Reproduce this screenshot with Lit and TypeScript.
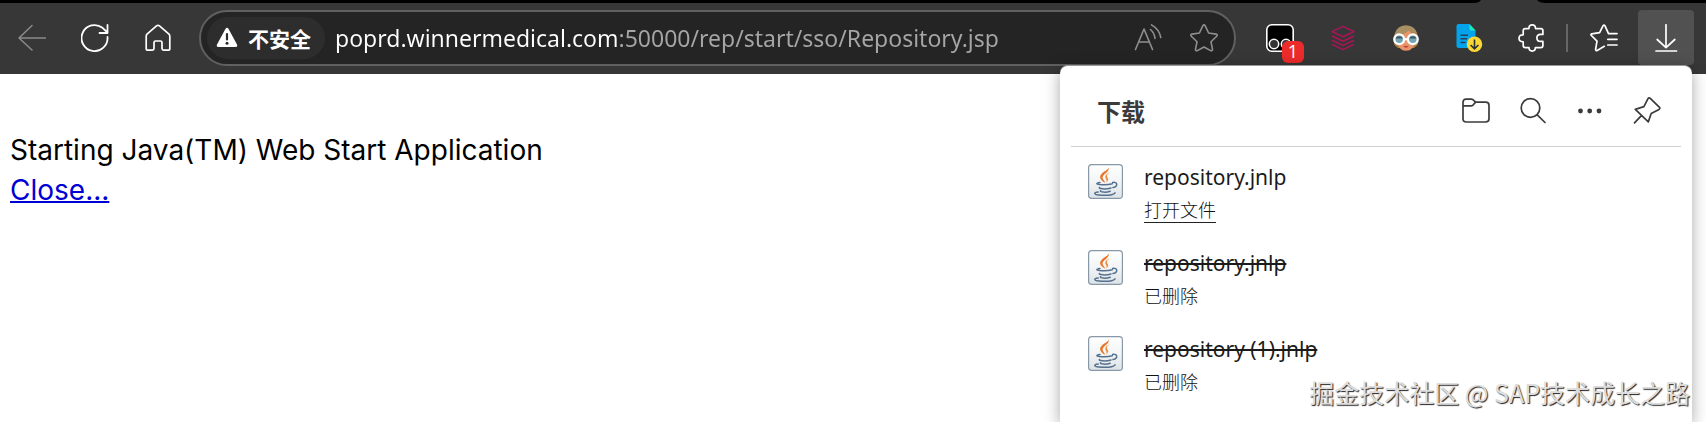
import { LitElement, html, css, svg } from "lit";
import { customElement, property } from "lit/decorators.js";

const icon = (size: number, body: unknown) =>
  html`<svg width=${size} height=${size} viewBox="0 0 ${size} ${size}" aria-hidden="true">${body}</svg>`;

const line = (d: string, width = 1.7) =>
  svg`<path d=${d} fill="none" stroke="currentColor" stroke-width=${width} stroke-linecap="round" stroke-linejoin="round"/>`;

const icons = {
  back: icon(28, line("M27.5 14H1M14 1.5L1 14L14 26", 1.5)),
  reload: icon(28, line("M26.5 13A13 13 0 1 1 21.5 3.8L26 8M26.5 1V9H18.5", 1.8)),
  home: icon(
    28,
    line(
      "M2.2 12.2Q2.2 11 3 10.2L12.8 1.7Q14 .8 15.2 1.7L25 10.2Q25.8 11 25.8 12.2V24.4Q25.8 26.2 24 26.2H19.6Q18 26.2 18 24.6V18.6Q18 17 16.4 17H11.6Q10 17 10 18.6V24.6Q10 26.2 8.4 26.2H4Q2.2 26.2 2.2 24.4Z",
    ),
  ),
  warning: icon(
    22,
    svg`<path d="M9.4 2Q11 -.4 12.6 2L21 17.4Q22 20 19.4 20H2.6Q0 20 1 17.4Z" fill="currentColor"/>
      <path d="M11 7V12.5" stroke="#2d2d2d" stroke-width="2.2" stroke-linecap="round"/><circle cx="11" cy="16.2" r="1.5" fill="#2d2d2d"/>`,
  ),
  readAloud: icon(28, line("M1.5 25.5L10 5L18.5 25.5M4.7 18H15.3M16.5 5.5Q20.5 9 21 14.5M17.5 .9Q25.5 5.5 26.8 13.5", 1.6)),
  star: icon(
    28,
    line(
      "M12.9 1.6Q14 -.2 15.1 1.6L18.6 9L26 10.1Q28 10.6 26.7 12.2L21 17.8L22.5 25.2Q22.5 27.3 20.7 26.6L14 23L7.3 26.6Q5.5 27.3 5.5 25.2L7 17.8L1.3 12.2Q0 10.6 2 10.1L9.4 9Z",
      1.6,
    ),
  ),
  monkey: icon(
    28,
    svg`<rect x=".8" y=".8" width="26.4" height="26.4" rx="5" fill="#000" stroke="#fff" stroke-width="1.6"/>
      <circle cx="8" cy="20" r="4.7" fill="#333" stroke="#fff" stroke-width="1.5"/><circle cx="20" cy="20" r="4.7" fill="#333" stroke="#fff" stroke-width="1.5"/>`,
  ),
  layers: icon(
    28,
    svg`<path d="M14 2.4L25 7.6L14 12.8L3 7.6ZM3 12L14 17.2L25 12M3 16.2L14 21.4L25 16.2M3 20.4L14 25.6L25 20.4" fill="none" stroke="#ad1457" stroke-width="1.5" stroke-linejoin="round"/>`,
  ),
  face: icon(
    28,
    svg`<path d="M2.5 21Q.5 13 4 7Q8 1.4 14 1.4Q20 1.4 24 7Q27.5 13 25.5 21L22 24H6Z" fill="#b0803f"/>
      <path d="M5.5 11Q12 11 17 6Q19 10 23 11V17Q22 26.8 14 26.8Q6 26.8 5.5 17Z" fill="#e8956b"/>
      <path d="M3 9.5Q5 1.4 14 1.4Q23 1.4 25 9.5Q20 9 17 6Q12 11 3 11Z" fill="#a89065"/>
      <path d="M11 22.6Q14 21 17 22.6Q14 24.8 11 22.6Z" fill="#c6433c"/>
      <circle cx="7.2" cy="15.2" r="4.9" fill="#71a6b5" stroke="#fff" stroke-width="2.3"/><circle cx="20.8" cy="15.2" r="4.9" fill="#71a6b5" stroke="#fff" stroke-width="2.3"/>
      <path d="M3.5 14.5A4 4 0 0 1 10.8 14.5ZM17.2 14.5A4 4 0 0 1 24.5 14.5Z" fill="#40555c"/><path d="M12.2 15.2H15.8" stroke="#fff" stroke-width="2.2"/>`,
  ),
  doc: icon(
    28,
    svg`<path d="M3.5 0H14.5L20.5 6.5V24H3.5Q1.5 24 1.5 22V2Q1.5 0 3.5 0Z" fill="#03a4ec"/><path d="M14.5 0L20.5 6.5H16Q14.5 6.5 14.5 5Z" fill="#1de9b6"/>
      <path d="M5.5 11.2H13M5.5 14.8H12M5.5 18.4H10.5" stroke="#263f58" stroke-width="1.5"/><circle cx="19.5" cy="20.3" r="7.7" fill="#fdd835"/>
      <path d="M19.5 15.5V24.5M15.6 21L19.5 24.8L23.4 21" fill="none" stroke="#263238" stroke-width="1.6"/>`,
  ),
  puzzle: icon(
    28,
    line(
      "M7.4 4.6H10.9Q10.8 .9 14.2 .9Q17.6 .9 17.5 4.6H22.7Q24.9 4.6 24.9 6.8V10.4H22.6Q18.9 10.6 18.9 14Q18.9 17.4 22.6 17.4H24.9V21.4Q24.9 23.6 22.7 23.6H17.4Q17.4 27.1 14.2 27.1Q11 27.1 11 23.6H7.4Q5.2 23.6 5.2 21.4V17.8Q1 17.8 1 14.2Q1 10.6 5.2 10.8V6.8Q5.2 4.6 7.4 4.6Z",
    ),
  ),
  favorites: icon(
    28,
    line(
      "M27 9.6H18.5L14.9 1.7Q14 .3 13.1 1.7L9.6 8.6L1.8 9.8Q.4 10.4 1.4 11.5L7 17.2L5.6 25.4Q5.8 27 7.2 26.4L14.3 22.3M17.8 15.3H27M17.8 21H27",
    ),
  ),
  download: icon(28, line("M14 .8V22.5M5.2 15.5L14 23.6L22.8 15.5M4 27H24.5", 1.7)),
  folder: icon(
    28,
    line(
      "M4 2.2H9.4Q10.8 2.2 12 3.6L13.7 5.2H23.6Q27 5.2 27 8.4V21.8Q27 25 23.6 25H4.2Q1 25 1 21.8V5.4Q1 2.2 4 2.2ZM1 8.8H9.2Q10.8 8.8 11.8 7.2L13.7 5.2",
    ),
  ),
  search: icon(28, svg`<circle cx="11.5" cy="11" r="9.3" fill="none" stroke="currentColor" stroke-width="1.7"/>${line("M18.2 17.8L26 25.5")}`),
  more: icon(28, svg`<circle cx="4.5" cy="14" r="2.4" fill="currentColor"/><circle cx="13.7" cy="14" r="2.4" fill="currentColor"/><circle cx="23" cy="14" r="2.4" fill="currentColor"/>`),
  pin: icon(28, line("M17 1.2L26.5 10.3Q27.3 11.6 26 12.4L18.2 16.5L15.3 24.9L2.3 12.4L10.9 9.6L15 1.7Q15.8 .3 17 1.2ZM8.4 18.7L1.5 25.8")),
  java: icon(
    35,
    svg`<defs><linearGradient id="tile" x1="0" y1="0" x2="0" y2="1"><stop offset="0" stop-color="#fff"/><stop offset=".5" stop-color="#f3f5f6"/><stop offset="1" stop-color="#dce2e6"/></linearGradient></defs>
      <rect x=".6" y=".6" width="33.8" height="33.8" rx="3.2" fill="url(#tile)" stroke="#8998a7" stroke-width="1.2"/>
      <path d="M20.3 3.2C23 8.2 12.4 10.3 15 15.1C15.7 16.5 17 17.6 17 18.8C12 15.6 10.2 12.7 14.6 8.7C17.5 6.4 20.7 5.6 20.3 3.2Z" fill="#e8762b"/>
      <path d="M22.5 8.6C16.8 10.3 19.3 13.4 20 14.6C20.7 16 19.4 17.5 18.2 18.4C19.4 15.7 17.6 15.1 17.3 13.1C17 10.8 19.7 9.1 22.5 8.6Z" fill="#ed8b3c"/>
      <g fill="none" stroke="#56718f" stroke-width="1.5" stroke-linecap="round"><path d="M12 18.4C7 19.2 8.5 20.6 13.5 20.8C18 21 22.5 20.4 24.3 19.8M24.6 18.5C29.5 17.3 30.5 22.3 25 23.6M11.6 23.5C9.5 24.7 17.5 25.6 23 24M12.6 26.7C11.5 28.2 18 28.8 22.2 27.2"/><path d="M10.2 28C5.8 28.4 5.2 30.4 11 30.9C17 31.4 25.2 31 27 28.9"/></g>`,
  ),
};

const buttonReset = css`
  button {
    display: flex;
    align-items: center;
    justify-content: center;
    padding: 0;
    border: 0;
    background: none;
    color: inherit;
    font: inherit;
  }
  svg {
    display: block;
    flex: none;
  }
`;

@customElement("browser-toolbar")
export class BrowserToolbar extends LitElement {
  static styles = [
    buttonReset,
    css`
      :host {
        display: block;
        background: #373737;
        color: #fff;
        font-family: "Open Sans", "Noto Sans CJK SC", sans-serif;
      }
      .tabs {
        display: flex;
        justify-content: flex-end;
        height: 3px;
        padding-right: 160px;
        background: #000;
      }
      .bar {
        display: flex;
        align-items: center;
        height: 55px;
        padding: 7px 12px 9px 0;
      }
      .tool {
        width: 63px;
        height: 55px;
      }
      .disabled {
        color: #8b8b8b;
      }
      .address {
        display: flex;
        flex: 1;
        align-items: center;
        box-sizing: border-box;
        height: 56px;
        min-width: 0;
        margin: 0 12px 0 10px;
        padding: 0 2px 0 6px;
        border: 2px solid #606060;
        border-radius: 28px;
        background: #242424;
      }
      .address .security {
        gap: 10px;
        height: 42px;
        padding: 0 14px 0 9px;
        border-radius: 21px;
        background: #2d2d2d;
        font-family: "Noto Sans CJK SC", sans-serif;
        font-size: 21px;
        font-weight: 700;
      }
      .url {
        flex: 1;
        min-width: 0;
        height: 42px;
        margin-left: 10px;
        padding: 0;
        border: 0;
        outline: 0;
        background: linear-gradient(90deg, #fff 284px, #a6a6a6 284px);
        background-clip: text;
        -webkit-background-clip: text;
        color: transparent;
        font-family: "Noto Sans", sans-serif;
        font-size: 23px;
      }
      .address .inner {
        width: 56px;
        color: #8f8f8f;
      }
      .badged {
        position: relative;
      }
      .badge {
        position: absolute;
        left: 34px;
        top: 31px;
        width: 22px;
        height: 22px;
        border-radius: 6px;
        background: #ee2b2b;
        font-size: 18px;
        line-height: 21px;
        text-align: center;
      }
      .divider {
        width: 2px;
        height: 28px;
        margin: 0 4px 0 3px;
        background: #666;
      }
      .bar .active {
        width: 56px;
        margin-left: 3px;
        border-radius: 4px;
        background: #515151;
      }
    `,
  ];

  render() {
    return html`
      <div class="tabs">
        <svg width="72" height="3" viewBox="0 0 72 3"><path d="M0 3Q5 3 7 0H63Q65 3 72 3Z" fill="#373737" /></svg>
      </div>
      <div class="bar">
        <button class="tool disabled" disabled aria-label="返回">${icons.back}</button>
        <button class="tool" aria-label="刷新">${icons.reload}</button>
        <button class="tool" aria-label="主页">${icons.home}</button>
        <div class="address">
          <button class="security">${icons.warning}<span>不安全</span></button>
          <input class="url" aria-label="地址" spellcheck="false" value="poprd.winnermedical.com:50000/rep/start/sso/Repository.jsp" />
          <button class="inner" aria-label="朗读">${icons.readAloud}</button>
          <button class="inner" aria-label="收藏">${icons.star}</button>
        </div>
        <button class="tool badged" aria-label="扩展">${icons.monkey}<span class="badge">1</span></button>
        <button class="tool" aria-label="扩展">${icons.layers}</button>
        <button class="tool" aria-label="扩展">${icons.face}</button>
        <button class="tool" aria-label="扩展">${icons.doc}</button>
        <button class="tool" aria-label="扩展">${icons.puzzle}</button>
        <span class="divider"></span>
        <button class="tool" aria-label="收藏夹">${icons.favorites}</button>
        <button class="tool active" aria-label="下载">${icons.download}</button>
      </div>
    `;
  }
}

interface DownloadItem {
  name: string;
  deleted: boolean;
}

@customElement("downloads-panel")
export class DownloadsPanel extends LitElement {
  @property({ attribute: false }) items: DownloadItem[] = [];

  static styles = [
    buttonReset,
    css`
      :host {
        display: block;
        box-sizing: border-box;
        padding: 0 11px;
        border-top: 1px solid #999;
        border-radius: 8px 8px 0 0;
        background: #fff;
        box-shadow: 0 4px 16px rgba(0, 0, 0, 0.35);
        color: #1b1b1b;
        font-family: "Noto Sans", "Noto Sans CJK SC", sans-serif;
      }
      header {
        display: flex;
        align-items: center;
        height: 70px;
        padding: 10px 6px 0 26px;
        border-bottom: 1px solid #d0d0d0;
        color: #3b3b3b;
      }
      h1 {
        flex: 1;
        margin: 0;
        font-family: "Noto Sans CJK SC", sans-serif;
        font-size: 24px;
        line-height: 36px;
      }
      .action {
        width: 57px;
        height: 48px;
      }
      ul {
        margin: 0;
        padding: 17px 16px 0 17px;
        list-style: none;
      }
      li {
        display: flex;
        gap: 21px;
        height: 86px;
      }
      .name {
        font-size: 21px;
        line-height: 26px;
      }
      .deleted {
        text-decoration: line-through;
        text-decoration-thickness: 2px;
      }
      .status {
        display: table;
        margin-top: 6px;
        color: #111;
        font-family: "Noto Sans CJK SC", sans-serif;
        font-size: 18px;
        font-weight: 300;
        line-height: 26px;
      }
      a.status {
        border-bottom: 1px solid #222;
        text-decoration: none;
      }
    `,
  ];

  render() {
    return html`
      <header>
        <h1>下载</h1>
        <button class="action" aria-label="打开下载文件夹">${icons.folder}</button>
        <button class="action" aria-label="搜索下载">${icons.search}</button>
        <button class="action" aria-label="更多选项">${icons.more}</button>
        <button class="action" aria-label="固定下载">${icons.pin}</button>
      </header>
      <ul>
        ${this.items.map(
          (item) => html`
            <li>
              ${icons.java}
              <div>
                <div class="name ${item.deleted ? "deleted" : ""}">${item.name}</div>
                ${item.deleted ? html`<span class="status">已删除</span>` : html`<a class="status" href="#">打开文件</a>`}
              </div>
            </li>
          `,
        )}
      </ul>
    `;
  }
}

@customElement("app-root")
export class AppRoot extends LitElement {
  private downloads: DownloadItem[] = [
    { name: "repository.jnlp", deleted: false },
    { name: "repository.jnlp", deleted: true },
    { name: "repository (1).jnlp", deleted: true },
  ];

  static styles = css`
    :host {
      display: block;
      position: relative;
      min-height: 100vh;
      overflow: hidden;
      background: #fff;
    }
    main {
      padding: 56px 10px 0;
      color: #000;
      font-family: "Inter", sans-serif;
      font-size: 28px;
      line-height: 40px;
    }
    p {
      margin: 0;
    }
    main a {
      color: #0000d4;
      text-decoration-thickness: 2px;
    }
    downloads-panel {
      position: absolute;
      top: 65px;
      right: 14px;
      bottom: 0;
      width: 632px;
    }
    .watermark {
      position: absolute;
      right: 16px;
      bottom: 12px;
      color: #ddd;
      font-family: "Noto Sans CJK SC", sans-serif;
      font-size: 25px;
      line-height: 36px;
      text-shadow: 1px 1px 1px #222;
    }
  `;

  render() {
    return html`
      <browser-toolbar></browser-toolbar>
      <main>
        <p>Starting Java(TM) Web Start Application</p>
        <a href="#">Close...</a>
      </main>
      <downloads-panel .items=${this.downloads}></downloads-panel>
      <div class="watermark">掘金技术社区 @ SAP技术成长之路</div>
    `;
  }
}
